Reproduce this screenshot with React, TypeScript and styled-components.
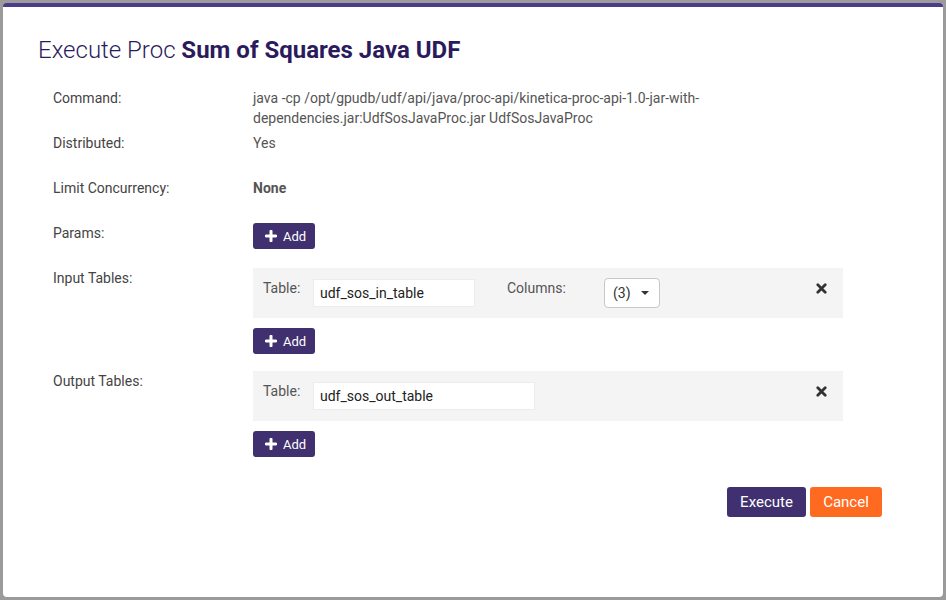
import React from "react";
import styled, { createGlobalStyle } from "styled-components";

const GlobalStyle = createGlobalStyle`
  html, body { margin: 0; padding: 0; }
  body {
    background: #9b9b9b;
    font-family: Roboto, "Liberation Sans", Arial, sans-serif;
    -webkit-font-smoothing: antialiased;
  }
`;

const Page = styled.div`
  width: 946px;
  height: 600px;
  box-sizing: border-box;
  padding: 3px 3px 3px 3px;
  background: #9b9b9b;
`;

const Modal = styled.div`
  width: 940px;
  height: 594px;
  box-sizing: border-box;
  background: #fff;
  border-top: 4px solid #4d3a8a;
  border-radius: 4px;
  display: flex;
  flex-direction: column;
`;

const Title = styled.h1`
  margin: 0;
  padding: 28px 35px 23px;
  font-size: 24px;
  line-height: 30px;
  font-weight: 300;
  color: #2b1b5c;
  b { font-weight: 700; }
`;

const Body = styled.div`
  padding: 0 0 0 50px;
  display: flex;
  flex-direction: column;
  gap: 5px;
`;

const Row = styled.div<{ $extra?: number }>`
  display: grid;
  grid-template-columns: 200px 590px;
  min-height: 40px;
  margin-bottom: ${(p) => p.$extra ?? 0}px;
  font-size: 14px;
  line-height: 20px;
`;

const Label = styled.div`
  color: #444;
`;

const Value = styled.div<{ $bold?: boolean }>`
  color: #555;
  font-weight: ${(p) => (p.$bold ? 700 : 400)};
`;

const Stack = styled.div`
  display: flex;
  flex-direction: column;
  align-items: flex-start;
  gap: 10px;
`;

const AddButton = styled.button`
  display: inline-flex;
  align-items: center;
  gap: 6px;
  width: 62px;
  height: 26px;
  padding: 0 0 0 12px;
  border: none;
  border-radius: 3px;
  background: #40306f;
  color: #fff;
  font-family: Roboto, "Liberation Sans", Arial, sans-serif;
  font-size: 13px;
  cursor: pointer;
  svg { width: 12px; height: 12px; flex: none; }
`;

const Panel = styled.div`
  width: 590px;
  height: 50px;
  box-sizing: border-box;
  background: #f4f4f4;
  padding: 10px 16px 0 10px;
  display: flex;
  align-items: flex-start;
`;

const FieldLabel = styled.span<{ $w: number }>`
  width: ${(p) => p.$w}px;
  flex: none;
  color: #555;
  font-size: 14px;
  line-height: 20px;
`;

const TextInput = styled.div<{ $w: number }>`
  width: ${(p) => p.$w}px;
  height: 28px;
  margin-top: 1px;
  box-sizing: border-box;
  background: #fff;
  border: 1px solid #ececec;
  padding: 0 6px;
  font-size: 14px;
  line-height: 26px;
  color: #222;
`;

const Gap = styled.span<{ $w: number }>`
  width: ${(p) => p.$w}px;
  flex: none;
`;

const Select = styled.div`
  width: 56px;
  height: 30px;
  box-sizing: border-box;
  border: 1px solid #c8c8c8;
  border-radius: 4px;
  background: #fff;
  display: flex;
  align-items: center;
  padding: 0 10px 0 8px;
  justify-content: space-between;
  font-size: 14px;
  color: #333;
`;

const Caret = styled.span`
  width: 0;
  height: 0;
  border-left: 4px solid transparent;
  border-right: 4px solid transparent;
  border-top: 4px solid #333;
`;

const Remove = styled.span`
  margin-left: auto;
  margin-top: 5px;
  display: flex;
  svg { width: 11px; height: 11px; }
`;

const Footer = styled.div`
  display: flex;
  justify-content: flex-end;
  gap: 4px;
  padding: 30px 61px 0 0;
`;

const ActionButton = styled.button<{ $variant: "primary" | "cancel" }>`
  height: 30px;
  padding: 0 12px;
  border: none;
  border-radius: 3px;
  font-family: Roboto, "Liberation Sans", Arial, sans-serif;
  font-size: 15px;
  color: #fff;
  background: ${(p) => (p.$variant === "primary" ? "#40306f" : "#ff6a21")};
  min-width: ${(p) => (p.$variant === "primary" ? 79 : 72)}px;
  cursor: pointer;
`;

const PlusIcon = () => (
  <svg viewBox="0 0 12 12" aria-hidden="true">
    <path d="M6 1.2v9.6M1.2 6h9.6" stroke="#fff" strokeWidth="3" strokeLinecap="round" />
  </svg>
);

const CrossIcon = () => (
  <svg viewBox="0 0 11 11" aria-hidden="true">
    <path d="M1.8 1.8l7.4 7.4M9.2 1.8l-7.4 7.4" stroke="#333" strokeWidth="2.8" strokeLinecap="round" />
  </svg>
);

const Add = () => (
  <AddButton>
    <PlusIcon />
    Add
  </AddButton>
);

export default function App() {
  return (
    <>
      <GlobalStyle />
      <Page>
        <Modal>
          <Title>
            Execute Proc <b>Sum of Squares Java UDF</b>
          </Title>
          <Body>
            <Row>
              <Label>Command:</Label>
              <Value>
                java -cp /opt/gpudb/udf/api/java/proc-api/kinetica-proc-api-1.0-jar-with-dependencies.jar:UdfSosJavaProc.jar
                UdfSosJavaProc
              </Value>
            </Row>
            <Row>
              <Label>Distributed:</Label>
              <Value>Yes</Value>
            </Row>
            <Row>
              <Label>Limit Concurrency:</Label>
              <Value $bold>None</Value>
            </Row>
            <Row>
              <Label>Params:</Label>
              <Stack>
                <Add />
              </Stack>
            </Row>
            <Row $extra={12}>
              <Label>Input Tables:</Label>
              <Stack>
                <Panel>
                  <FieldLabel $w={50}>Table:</FieldLabel>
                  <TextInput $w={162}>udf_sos_in_table</TextInput>
                  <Gap $w={32} />
                  <FieldLabel $w={97}>Columns:</FieldLabel>
                  <Select>
                    (3) <Caret />
                  </Select>
                  <Remove>
                    <CrossIcon />
                  </Remove>
                </Panel>
                <Add />
              </Stack>
            </Row>
            <Row>
              <Label>Output Tables:</Label>
              <Stack>
                <Panel>
                  <FieldLabel $w={50}>Table:</FieldLabel>
                  <TextInput $w={222}>udf_sos_out_table</TextInput>
                  <Remove>
                    <CrossIcon />
                  </Remove>
                </Panel>
                <Add />
              </Stack>
            </Row>
          </Body>
          <Footer>
            <ActionButton $variant="primary">Execute</ActionButton>
            <ActionButton $variant="cancel">Cancel</ActionButton>
          </Footer>
        </Modal>
      </Page>
    </>
  );
}
